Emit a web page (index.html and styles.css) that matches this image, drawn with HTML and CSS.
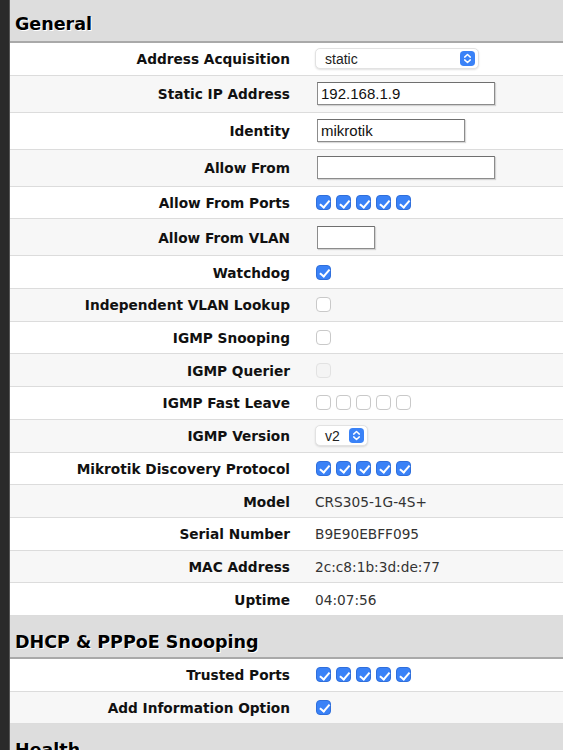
FILE: index.html
```html
<!DOCTYPE html>
<html lang="en">
<head>
  <meta charset="UTF-8" />
  <meta name="viewport" content="width=device-width, initial-scale=1.0">
  <title>SwOS - System</title>
  <link rel="stylesheet" href="styles.css">
</head>
<body>
  <div class="sidebar"></div>

  <div class="content">
    <div class="section-head first">General</div>

    <div class="row">
      <div class="label">Address Acquisition</div>
      <div class="value">
        <div class="select wide">
          <span>static</span>
          <svg class="chevron" viewBox="0 0 16 16"><rect width="16" height="16" rx="4" fill="#3a82f7"/><path d="M5 6.5 8 3.8l3 2.7M5 9.5l3 2.7 3-2.7" fill="none" stroke="#fff" stroke-width="1.6" stroke-linecap="round" stroke-linejoin="round"/></svg>
        </div>
      </div>
    </div>

    <div class="row tall alt">
      <div class="label">Static IP Address</div>
      <div class="value"><div class="input long">192.168.1.9</div></div>
    </div>

    <div class="row tall">
      <div class="label">Identity</div>
      <div class="value"><div class="input mid">mikrotik</div></div>
    </div>

    <div class="row tall alt">
      <div class="label">Allow From</div>
      <div class="value"><div class="input long"></div></div>
    </div>

    <div class="row">
      <div class="label">Allow From Ports</div>
      <div class="value ports">
        <span class="check on"></span><span class="check on"></span><span class="check on"></span><span class="check on"></span><span class="check on"></span>
      </div>
    </div>

    <div class="row tall alt">
      <div class="label">Allow From VLAN</div>
      <div class="value"><div class="input short"></div></div>
    </div>

    <div class="row">
      <div class="label">Watchdog</div>
      <div class="value"><span class="check on"></span></div>
    </div>

    <div class="row alt">
      <div class="label">Independent VLAN Lookup</div>
      <div class="value"><span class="check"></span></div>
    </div>

    <div class="row">
      <div class="label">IGMP Snooping</div>
      <div class="value"><span class="check"></span></div>
    </div>

    <div class="row alt">
      <div class="label">IGMP Querier</div>
      <div class="value"><span class="check disabled"></span></div>
    </div>

    <div class="row">
      <div class="label">IGMP Fast Leave</div>
      <div class="value ports">
        <span class="check"></span><span class="check"></span><span class="check"></span><span class="check"></span><span class="check"></span>
      </div>
    </div>

    <div class="row alt">
      <div class="label">IGMP Version</div>
      <div class="value">
        <div class="select narrow">
          <span>v2</span>
          <svg class="chevron" viewBox="0 0 16 16"><rect width="16" height="16" rx="4" fill="#3a82f7"/><path d="M5 6.5 8 3.8l3 2.7M5 9.5l3 2.7 3-2.7" fill="none" stroke="#fff" stroke-width="1.6" stroke-linecap="round" stroke-linejoin="round"/></svg>
        </div>
      </div>
    </div>

    <div class="row">
      <div class="label">Mikrotik Discovery Protocol</div>
      <div class="value ports">
        <span class="check on"></span><span class="check on"></span><span class="check on"></span><span class="check on"></span><span class="check on"></span>
      </div>
    </div>

    <div class="row alt">
      <div class="label">Model</div>
      <div class="value text">CRS305-1G-4S+</div>
    </div>

    <div class="row">
      <div class="label">Serial Number</div>
      <div class="value text">B9E90EBFF095</div>
    </div>

    <div class="row alt">
      <div class="label">MAC Address</div>
      <div class="value text">2c:c8:1b:3d:de:77</div>
    </div>

    <div class="row">
      <div class="label">Uptime</div>
      <div class="value text">04:07:56</div>
    </div>

    <div class="section-head">DHCP &amp; PPPoE Snooping</div>

    <div class="row">
      <div class="label">Trusted Ports</div>
      <div class="value ports">
        <span class="check on"></span><span class="check on"></span><span class="check on"></span><span class="check on"></span><span class="check on"></span>
      </div>
    </div>

    <div class="row alt">
      <div class="label">Add Information Option</div>
      <div class="value"><span class="check on"></span></div>
    </div>

    <div class="section-head">Health</div>
  </div>
</body>
</html>
```

FILE: styles.css
```css
body {
  margin: 0;
  display: flex;
  min-height: 100vh;
  background: #dddddd;
  font-family: "DejaVu Sans", Verdana, sans-serif;
  color: #111;
}

.sidebar {
  width: 9px;
  flex-shrink: 0;
  background: #2a2a2a;
  border-right: 1px solid #555;
}

.content {
  flex: 1;
  display: flex;
  flex-direction: column;
}

.section-head {
  height: 43px;
  box-sizing: border-box;
  padding: 16px 0 0 5px;
  background: #dddddd;
  border-bottom: 2px solid #a9a9a9;
  font-size: 17.5px;
  line-height: 20px;
  font-weight: bold;
  color: #000;
  text-shadow: 1px 1px 0 #fff;
  flex-shrink: 0;
}

.section-head.first {
  padding-top: 14px;
}

.row {
  height: 32.7px;
  box-sizing: border-box;
  display: flex;
  align-items: center;
  background: #fff;
  border-bottom: 1px solid #dcdcdc;
  flex-shrink: 0;
}

.row.tall {
  height: 37px;
}

.row.alt {
  background: #f7f7f7;
}

.label {
  width: 280px;
  flex-shrink: 0;
  text-align: right;
  font-size: 13.7px;
  font-weight: bold;
  padding-top: 1px;
}

.value {
  padding-left: 25px;
  display: flex;
  align-items: center;
}

.value.text {
  font-size: 13.7px;
  color: #333;
  padding-top: 1px;
}

.ports {
  gap: 5px;
  padding-left: 26px;
}

/* macOS style popup */
.select {
  height: 21px;
  box-sizing: border-box;
  display: flex;
  align-items: center;
  justify-content: space-between;
  padding: 0 3px 0 9px;
  background: #fff;
  border: 1px solid #e2e2e2;
  border-radius: 5px;
  box-shadow: 0 1px 2px rgba(0, 0, 0, 0.12);
  font-family: "Liberation Sans", Arial, sans-serif;
  font-size: 14px;
  color: #222;
}

.select.wide {
  width: 164px;
}

.select.narrow {
  width: 53px;
}

.chevron {
  width: 15px;
  height: 15px;
}

.input {
  height: 23px;
  box-sizing: border-box;
  padding: 1px 3px 0;
  background: #fff;
  border: 1px solid #8c8c8c;
  border-top-color: #6f6f6f;
  box-shadow: 1px 1px 1px rgba(0, 0, 0, 0.15);
  font-family: "Liberation Sans", Arial, sans-serif;
  font-size: 15px;
  line-height: 20px;
  color: #111;
  margin-left: 2px;
}

.input.long {
  width: 178px;
}

.input.mid {
  width: 148px;
}

.input.short {
  width: 58px;
}

.check {
  width: 15px;
  height: 15px;
  box-sizing: border-box;
  border-radius: 4px;
  border: 1px solid #c9c9c9;
  background: #fff;
  position: relative;
  margin-left: 1px;
}

.ports .check {
  margin-left: 0;
}

.check.on {
  background: #3a82f7;
  border-color: #2f6fdc;
}

.check.on::after {
  content: "";
  position: absolute;
  left: 4.5px;
  top: 1.5px;
  width: 3.5px;
  height: 7.5px;
  border-right: 2px solid #fff;
  border-bottom: 2px solid #fff;
  transform: rotate(40deg);
}

.check.disabled {
  background: #f4f4f4;
  border-color: #e2e2e2;
}
```
